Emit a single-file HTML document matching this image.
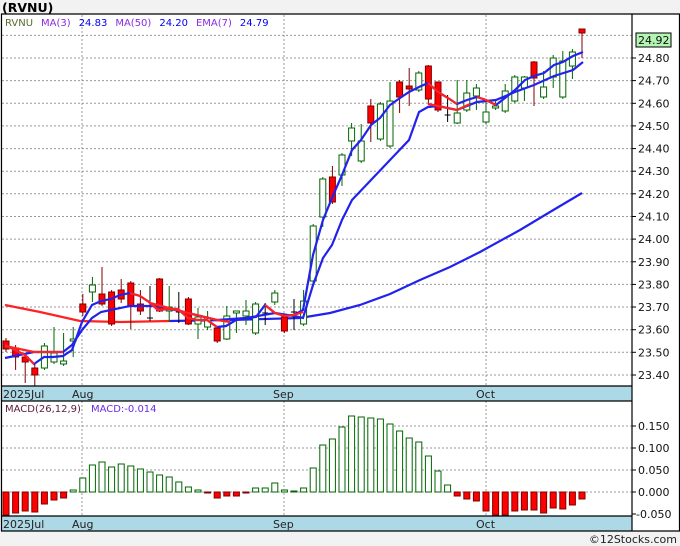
<!DOCTYPE html>
<html><head><meta charset="utf-8"><style>
html,body{margin:0;padding:0;background:#f2f2f2;}
svg{display:block;font-family:"DejaVu Sans","Liberation Sans",sans-serif;}
</style></head><body>
<svg width="680" height="546" viewBox="0 0 680 546" xmlns="http://www.w3.org/2000/svg">
<rect x="0" y="0" width="680" height="546" fill="#f2f2f2"/>
<text x="2" y="12" font-size="12.5" font-weight="bold" fill="#000">(RVNU)</text>
<rect x="1" y="14" width="678" height="517" fill="#fff"/>
<g stroke="#999" stroke-width="1" stroke-dasharray="2,2">
<line x1="2" y1="35.4" x2="632" y2="35.4"/>
<line x1="2" y1="58" x2="632" y2="58"/><line x1="2" y1="80.6" x2="632" y2="80.6"/><line x1="2" y1="103.3" x2="632" y2="103.3"/><line x1="2" y1="125.9" x2="632" y2="125.9"/><line x1="2" y1="148.6" x2="632" y2="148.6"/><line x1="2" y1="171.2" x2="632" y2="171.2"/><line x1="2" y1="193.8" x2="632" y2="193.8"/><line x1="2" y1="216.5" x2="632" y2="216.5"/><line x1="2" y1="239.1" x2="632" y2="239.1"/><line x1="2" y1="261.8" x2="632" y2="261.8"/><line x1="2" y1="284.4" x2="632" y2="284.4"/><line x1="2" y1="307" x2="632" y2="307"/><line x1="2" y1="329.7" x2="632" y2="329.7"/><line x1="2" y1="352.3" x2="632" y2="352.3"/><line x1="2" y1="375" x2="632" y2="375"/>
<line x1="2" y1="426" x2="632" y2="426"/><line x1="2" y1="448" x2="632" y2="448"/><line x1="2" y1="470" x2="632" y2="470"/><line x1="2" y1="492" x2="632" y2="492"/>
<line x1="82" y1="15" x2="82" y2="386"/><line x1="284" y1="15" x2="284" y2="386"/><line x1="486" y1="15" x2="486" y2="386"/>
<line x1="82" y1="401" x2="82" y2="516"/><line x1="284" y1="401" x2="284" y2="516"/><line x1="486" y1="401" x2="486" y2="516"/>
</g>
<text x="5" y="26" font-size="10"><tspan fill="#556b2f">RVNU</tspan><tspan fill="#8a2be2" dx="8">MA(3)</tspan><tspan fill="#0000ee" dx="8">24.83</tspan><tspan fill="#8a2be2" dx="8">MA(50)</tspan><tspan fill="#0000ee" dx="8">24.20</tspan><tspan fill="#8a2be2" dx="8">EMA(7)</tspan><tspan fill="#0000ee" dx="8">24.79</tspan></text>
<polyline fill="none" stroke="#f22" stroke-width="2.2" points="5,305 40,312 80,321 120,322 170,321"/>
<polyline fill="none" stroke="#22e" stroke-width="2.2" points="170,321 230,320 300,318 330,313 360,305 390,294 420,280 450,267 480,252 520,230 550,212 582,193"/>
<g stroke-width="1">
<g stroke="#800000" fill="#f00">
<line x1="6" y1="338" x2="6" y2="352"/><rect x="3" y="341" width="6" height="8"/>
<line x1="15.6" y1="345" x2="15.6" y2="370"/><rect x="12.6" y="348" width="6" height="9"/>
<line x1="25.2" y1="354" x2="25.2" y2="383"/><rect x="22.2" y="357" width="6" height="5"/>
<line x1="34.8" y1="364" x2="34.8" y2="386"/><rect x="31.8" y="368" width="6" height="7"/>
<line x1="82.8" y1="294" x2="82.8" y2="316"/><rect x="79.8" y="304" width="6" height="8"/>
<line x1="102" y1="267" x2="102" y2="306"/><rect x="99" y="294" width="6" height="10"/>
<line x1="111.6" y1="290" x2="111.6" y2="326"/><rect x="108.6" y="292" width="6" height="32"/>
<line x1="121.2" y1="279" x2="121.2" y2="303"/><rect x="118.2" y="290" width="6" height="9"/>
<line x1="130.8" y1="281" x2="130.8" y2="329"/><rect x="127.8" y="283" width="6" height="23"/>
<line x1="140.4" y1="290" x2="140.4" y2="315"/><rect x="137.4" y="304" width="6" height="7"/>
<line x1="159.6" y1="278" x2="159.6" y2="312"/><rect x="156.6" y="279" width="6" height="32"/>
<line x1="188.4" y1="297" x2="188.4" y2="325"/><rect x="185.4" y="299" width="6" height="25"/>
<line x1="217.2" y1="326" x2="217.2" y2="343"/><rect x="214.2" y="328" width="6" height="13"/>
<line x1="284.4" y1="315" x2="284.4" y2="333"/><rect x="281.4" y="317" width="6" height="14"/>
<line x1="332.4" y1="166" x2="332.4" y2="204"/><rect x="329.4" y="177" width="6" height="25"/>
<line x1="370.8" y1="99" x2="370.8" y2="142"/><rect x="367.8" y="106" width="6" height="17"/>
<line x1="399.6" y1="80" x2="399.6" y2="113"/><rect x="396.6" y="82" width="6" height="15"/>
<line x1="409.2" y1="68" x2="409.2" y2="106"/><rect x="406.2" y="86" width="6" height="3"/>
<line x1="428.4" y1="65" x2="428.4" y2="105"/><rect x="425.4" y="66" width="6" height="33"/>
<line x1="438" y1="82" x2="438" y2="112"/><rect x="435" y="82" width="6" height="28"/>
<line x1="534" y1="61" x2="534" y2="106"/><rect x="531" y="62" width="6" height="16"/>
<line x1="582" y1="29" x2="582" y2="58"/><rect x="579" y="29" width="6" height="4"/>
</g>
<g stroke="#006400" fill="#fff">
<line x1="44.4" y1="343" x2="44.4" y2="370"/><rect x="41.4" y="346" width="6" height="22"/>
<line x1="54" y1="327" x2="54" y2="364"/><rect x="51" y="353" width="6" height="9"/>
<line x1="63.6" y1="333" x2="63.6" y2="366"/><rect x="60.6" y="361" width="6" height="3"/>
<line x1="73.2" y1="327" x2="73.2" y2="357"/><rect x="70.2" y="339" width="6" height="2"/>
<line x1="92.4" y1="277" x2="92.4" y2="302"/><rect x="89.4" y="285" width="6" height="7"/>
<line x1="169.2" y1="286" x2="169.2" y2="322"/><rect x="166.2" y="307" width="6" height="4"/>
<line x1="198" y1="308" x2="198" y2="339"/><rect x="195" y="317" width="6" height="7"/>
<line x1="207.6" y1="311" x2="207.6" y2="330"/><rect x="204.6" y="318" width="6" height="9"/>
<line x1="226.8" y1="306" x2="226.8" y2="340"/><rect x="223.8" y="316" width="6" height="23"/>
<line x1="236.4" y1="311" x2="236.4" y2="333"/><rect x="233.4" y="311" width="6" height="2"/>
<line x1="246" y1="300" x2="246" y2="325"/><rect x="243" y="311" width="6" height="5"/>
<line x1="255.6" y1="302" x2="255.6" y2="335"/><rect x="252.6" y="304" width="6" height="29"/>
<line x1="274.8" y1="290" x2="274.8" y2="305"/><rect x="271.8" y="293" width="6" height="9"/>
<line x1="303.6" y1="290" x2="303.6" y2="326"/><rect x="300.6" y="301" width="6" height="23"/>
<line x1="313.2" y1="224" x2="313.2" y2="283"/><rect x="310.2" y="226" width="6" height="55"/>
<line x1="322.8" y1="177" x2="322.8" y2="227"/><rect x="319.8" y="179" width="6" height="38"/>
<line x1="342" y1="153" x2="342" y2="186"/><rect x="339" y="155" width="6" height="20"/>
<line x1="351.6" y1="123" x2="351.6" y2="156"/><rect x="348.6" y="128" width="6" height="13"/>
<line x1="361.2" y1="124" x2="361.2" y2="163"/><rect x="358.2" y="141" width="6" height="20"/>
<line x1="380.4" y1="102" x2="380.4" y2="141"/><rect x="377.4" y="104" width="6" height="35"/>
<line x1="390" y1="82" x2="390" y2="148"/><rect x="387" y="101" width="6" height="45"/>
<line x1="418.8" y1="71" x2="418.8" y2="92"/><rect x="415.8" y="73" width="6" height="17"/>
<line x1="457.2" y1="80" x2="457.2" y2="124"/><rect x="454.2" y="113" width="6" height="10"/>
<line x1="466.8" y1="80" x2="466.8" y2="112"/><rect x="463.8" y="93" width="6" height="17"/>
<line x1="476.4" y1="84" x2="476.4" y2="110"/><rect x="473.4" y="88" width="6" height="8"/>
<line x1="486" y1="100" x2="486" y2="124"/><rect x="483" y="112" width="6" height="10"/>
<line x1="495.6" y1="99" x2="495.6" y2="110"/><rect x="492.6" y="106" width="6" height="2"/>
<line x1="505.2" y1="84" x2="505.2" y2="113"/><rect x="502.2" y="91" width="6" height="20"/>
<line x1="514.8" y1="75" x2="514.8" y2="103"/><rect x="511.8" y="77" width="6" height="24"/>
<line x1="524.4" y1="76" x2="524.4" y2="101"/><rect x="521.4" y="77" width="6" height="11"/>
<line x1="543.6" y1="71" x2="543.6" y2="99"/><rect x="540.6" y="87" width="6" height="10"/>
<line x1="553.2" y1="55" x2="553.2" y2="88"/><rect x="550.2" y="58" width="6" height="19"/>
<line x1="562.8" y1="51" x2="562.8" y2="99"/><rect x="559.8" y="61" width="6" height="36"/>
<line x1="572.4" y1="49" x2="572.4" y2="79"/><rect x="569.4" y="52" width="6" height="14"/>
</g>
<g stroke="#000">
<line x1="150" y1="286" x2="150" y2="321"/><line x1="147" y1="318" x2="153" y2="318"/>
<line x1="178.8" y1="292" x2="178.8" y2="323"/><line x1="175.8" y1="312" x2="181.8" y2="312"/>
<line x1="265.2" y1="303" x2="265.2" y2="325"/><line x1="262.2" y1="313" x2="268.2" y2="313"/>
<line x1="294" y1="299" x2="294" y2="330"/><line x1="291" y1="312" x2="297" y2="312"/>
<line x1="447.6" y1="95" x2="447.6" y2="122"/><line x1="444.6" y1="115" x2="450.6" y2="115"/>
</g>
</g>
<polyline fill="none" stroke="#22e" stroke-width="2.2" points="5,358 34,352 63,352 72,345 82,330 92,318 101,312 130,306 158,306 188,313 217,320 246,318 275,313 294,316 303,318 313,285 323,258 332,245 342,220 352,200 371,180 390,160 409,140 419,112 428,107 438,106 457,110 477,102 496,100 515,92 534,85 554,76 573,70 583,62"/>
<polyline fill="none" stroke="#22e" stroke-width="2.2" points="5,345 15,350 25,355 34,364 44,357 53,357 63,356 72,350 82,322 92,305 101,301 111,299 120,295 130,293 140,296 149,302 158,310 168,309 178,309 188,318 197,320 207,320 217,327 226,326 236,320 246,318 256,317 265,305 275,313 285,316 294,315 303,310 313,255 323,220 332,198 342,175 352,150 361,140 371,125 380,118 390,105 400,98 409,92 419,87 428,83 438,92 448,98 457,104 467,100 477,97 486,100 496,105 505,98 515,90 525,80 534,76 544,73 554,65 563,62 573,56 583,52"/>
<g fill="none" stroke="#f22" stroke-width="2.2">
<polyline points="5,345 15,350 25,355 34,364"/>
<polyline points="5,346 34,352 63,352"/>
<polyline points="130,293 140,296 149,302 158,310 168,309 178,309 188,318 197,320 207,320 217,327"/>
<polyline points="150,303 188,313 217,320 230,322"/>
<polyline points="265,305 275,313 285,316 294,315 303,312"/>
<polyline points="428,83 438,92 448,98 457,104"/>
<polyline points="428,104 438,106 457,110 470,104"/>
<polyline points="477,97 486,100 496,105"/>
</g>
<text x="5" y="412" font-size="10"><tspan fill="#5a1a3a">MACD(26,12,9)</tspan><tspan fill="#6a2be2" dx="10">MACD:-0.014</tspan></text>
<g stroke-width="1">
<g fill="#f00" stroke="#800000">
<rect x="3" y="492" width="6" height="23"/><rect x="12.6" y="492" width="6" height="21"/><rect x="22.2" y="492" width="6" height="19"/><rect x="31.8" y="492" width="6" height="20"/><rect x="41.4" y="492" width="6" height="12"/><rect x="51" y="492" width="6" height="8"/><rect x="60.6" y="492" width="6" height="6"/>
<rect x="204.6" y="492" width="6" height="1"/><rect x="214.2" y="492" width="6" height="6"/><rect x="223.8" y="492" width="6" height="4"/><rect x="233.4" y="492" width="6" height="4"/><rect x="243" y="492" width="6" height="1"/>
<rect x="454.2" y="492" width="6" height="4"/><rect x="463.8" y="492" width="6" height="7"/><rect x="473.4" y="492" width="6" height="9"/><rect x="483" y="492" width="6" height="19"/><rect x="492.6" y="492" width="6" height="23"/><rect x="502.2" y="492" width="6" height="23"/><rect x="511.8" y="492" width="6" height="19"/><rect x="521.4" y="492" width="6" height="18"/><rect x="531" y="492" width="6" height="18"/><rect x="540.6" y="492" width="6" height="21"/><rect x="550.2" y="492" width="6" height="16"/><rect x="559.8" y="492" width="6" height="17"/><rect x="569.4" y="492" width="6" height="13"/><rect x="579" y="492" width="6" height="7"/>
</g>
<g fill="#fff" stroke="#006400">
<rect x="70.2" y="490" width="6" height="2"/><rect x="79.8" y="478" width="6" height="14"/><rect x="89.4" y="465" width="6" height="27"/><rect x="99" y="462" width="6" height="30"/><rect x="108.6" y="467" width="6" height="25"/><rect x="118.2" y="464" width="6" height="28"/><rect x="127.8" y="466" width="6" height="26"/><rect x="137.4" y="469" width="6" height="23"/><rect x="147" y="472" width="6" height="20"/><rect x="156.6" y="475" width="6" height="17"/><rect x="166.2" y="477" width="6" height="15"/><rect x="175.8" y="482" width="6" height="10"/><rect x="185.4" y="487" width="6" height="5"/><rect x="195" y="490" width="6" height="2"/>
<rect x="252.6" y="488" width="6" height="4"/><rect x="262.2" y="488" width="6" height="4"/><rect x="271.8" y="483" width="6" height="9"/><rect x="281.4" y="490" width="6" height="2"/><rect x="291" y="491" width="6" height="1"/><rect x="300.6" y="488" width="6" height="4"/>
<rect x="310.2" y="468" width="6" height="24"/><rect x="319.8" y="445" width="6" height="47"/><rect x="329.4" y="439" width="6" height="53"/><rect x="339" y="427" width="6" height="65"/><rect x="348.6" y="416" width="6" height="76"/><rect x="358.2" y="417" width="6" height="75"/><rect x="367.8" y="418" width="6" height="74"/><rect x="377.4" y="419" width="6" height="73"/><rect x="387" y="424" width="6" height="68"/><rect x="396.6" y="431" width="6" height="61"/><rect x="406.2" y="438" width="6" height="54"/><rect x="415.8" y="442" width="6" height="50"/><rect x="425.4" y="456" width="6" height="36"/><rect x="435" y="471" width="6" height="21"/><rect x="444.6" y="485" width="6" height="7"/>
</g>
</g>
<rect x="1" y="386" width="631" height="15" fill="#add8e6"/>
<rect x="1" y="516" width="631" height="15" fill="#add8e6"/>
<g stroke="#000" stroke-width="1.2" fill="none">
<line x1="1" y1="386" x2="632" y2="386"/><line x1="1" y1="401" x2="632" y2="401"/>
<line x1="1" y1="516" x2="632" y2="516"/><line x1="1" y1="531" x2="680" y2="531"/>
<line x1="1" y1="14" x2="680" y2="14"/>
<line x1="1.5" y1="14" x2="1.5" y2="531"/><line x1="632" y1="14" x2="632" y2="531"/><line x1="679.5" y1="14" x2="679.5" y2="531"/>
</g>
<g font-size="11" fill="#222">
<text x="3" y="398">2025Jul</text><text x="72" y="398">Aug</text><text x="273" y="398">Sep</text><text x="476" y="398">Oct</text>
<text x="3" y="528">2025Jul</text><text x="72" y="528">Aug</text><text x="273" y="528">Sep</text><text x="476" y="528">Oct</text>
</g>
<g stroke="#000" stroke-width="1">
<line x1="632" y1="58" x2="636" y2="58"/><line x1="632" y1="80.6" x2="636" y2="80.6"/><line x1="632" y1="103.3" x2="636" y2="103.3"/><line x1="632" y1="125.9" x2="636" y2="125.9"/><line x1="632" y1="148.6" x2="636" y2="148.6"/><line x1="632" y1="171.2" x2="636" y2="171.2"/><line x1="632" y1="193.8" x2="636" y2="193.8"/><line x1="632" y1="216.5" x2="636" y2="216.5"/><line x1="632" y1="239.1" x2="636" y2="239.1"/><line x1="632" y1="261.8" x2="636" y2="261.8"/><line x1="632" y1="284.4" x2="636" y2="284.4"/><line x1="632" y1="307" x2="636" y2="307"/><line x1="632" y1="329.7" x2="636" y2="329.7"/><line x1="632" y1="352.3" x2="636" y2="352.3"/><line x1="632" y1="375" x2="636" y2="375"/>
<line x1="632" y1="426" x2="636" y2="426"/><line x1="632" y1="448" x2="636" y2="448"/><line x1="632" y1="470" x2="636" y2="470"/><line x1="632" y1="492" x2="636" y2="492"/><line x1="632" y1="514" x2="636" y2="514"/>
</g>
<rect x="636" y="33" width="35" height="14" fill="#b4f5b4" stroke="#000" stroke-width="1"/>
<g font-size="11" fill="#111">
<text x="638" y="44">24.92</text>
<text x="638" y="62">24.80</text><text x="638" y="84.6">24.70</text><text x="638" y="107.3">24.60</text><text x="638" y="129.9">24.50</text><text x="638" y="152.6">24.40</text><text x="638" y="175.2">24.30</text><text x="638" y="197.8">24.20</text><text x="638" y="220.5">24.10</text><text x="638" y="243.1">24.00</text><text x="638" y="265.8">23.90</text><text x="638" y="288.4">23.80</text><text x="638" y="311">23.70</text><text x="638" y="333.7">23.60</text><text x="638" y="356.3">23.50</text><text x="638" y="379">23.40</text>
<text x="638" y="430">0.150</text><text x="638" y="452">0.100</text><text x="638" y="474">0.050</text><text x="638" y="496">0.000</text><text x="636" y="518">-0.050</text>
</g>
<text x="677" y="543" font-size="11" fill="#222" text-anchor="end">©12Stocks.com</text>
</svg>
</body></html>
